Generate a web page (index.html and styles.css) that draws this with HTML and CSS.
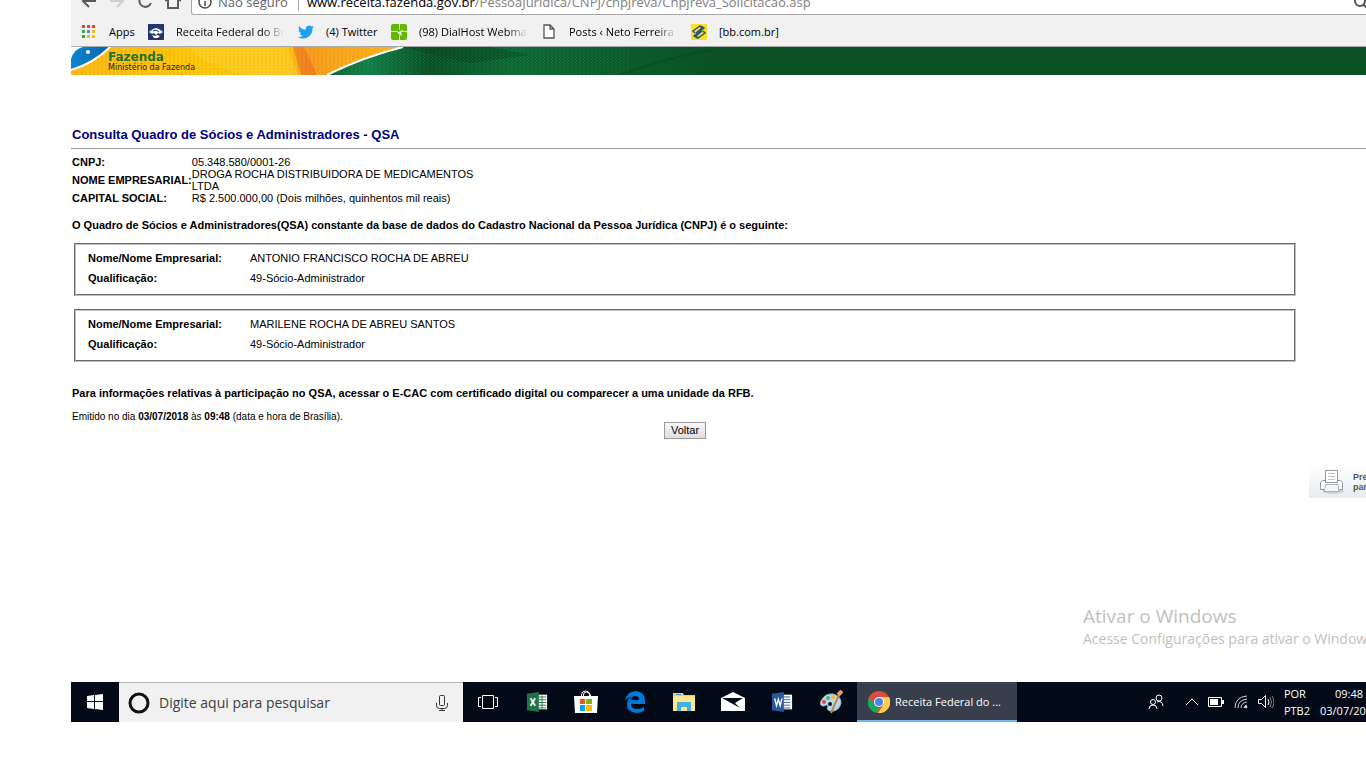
FILE: index.html
```html
<!DOCTYPE html>
<html lang="pt-BR">
<head>
<meta charset="utf-8">
<title>Consulta Quadro de Sócios e Administradores - QSA</title>
<link rel="stylesheet" href="styles.css">
</head>
<body>
<div class="screen">
  <div class="toolbar">
    <div class="nav">
      <button class="nav-btn" aria-label="Voltar página"><svg width="16" height="16" viewBox="0 0 16 16" fill="none" stroke="#5a5a5a" stroke-width="2"><path d="M15 8H2M8 2L2 8l6 6"/></svg></button>
      <button class="nav-btn" aria-label="Avançar"><svg width="16" height="16" viewBox="0 0 16 16" fill="none" stroke="#cfcfcf" stroke-width="2"><path d="M1 8h13M8 2l6 6-6 6"/></svg></button>
      <button class="nav-btn" aria-label="Recarregar"><svg width="16" height="16" viewBox="0 0 16 16" fill="none" stroke="#5a5a5a" stroke-width="2"><path d="M13 4a6 6 0 1 0 1 6"/></svg></button>
      <button class="nav-btn" aria-label="Início"><svg width="16" height="16" viewBox="0 0 16 16" fill="none" stroke="#5a5a5a" stroke-width="2"><path d="M0 8l8-7 8 7M3 7v8h10V7"/></svg></button>
    </div>
    <div class="address">
      <svg width="14" height="14" viewBox="0 0 14 14" fill="none" stroke="#4a4a4a" stroke-width="1.500"><circle cx="7" cy="7" r="6"/><path d="M7 6v5M7 3v2"/></svg>
      <span class="insecure">Não seguro</span>
      <span class="divider"></span>
      <span class="url">www.receita.fazenda.gov.br<span class="path">/PessoaJuridica/CNPJ/cnpjreva/Cnpjreva_Solicitacao.asp</span></span>
      <svg class="lens" width="16" height="16" viewBox="0 0 16 16" fill="none" stroke="#555" stroke-width="2"><circle cx="6" cy="7" r="5"/><path d="M9 10l5 5"/></svg>
    </div>
  </div>
  <nav class="bookmarks">
    <a href="#" class="bm bm-apps"><svg width="14" height="14" viewBox="0 0 14 14"><path fill="#ea4335" d="M0 0h3v3H0zM5 0h3v3H5zM10 0h3v3h-3z"/><path fill="#34a853" d="M0 5h3v3H0zM0 10h3v3H0z"/><path fill="#4285f4" d="M5 5h3v3H5z"/><path fill="#fbbc05" d="M10 5h3v3h-3zM5 10h3v3H5zM10 10h3v3h-3z"/></svg><span>Apps</span></a>
    <a href="#" class="bm bm-receita"><svg width="16" height="16" viewBox="0 0 16 16"><path fill="#22366f" d="M0 0h16v16H0z"/><path fill="#fff" d="M1 8l4-3 3-1 3 1 4 3-3 2-2-1-2 2-2-2-2 1zM4 11l3 1 2-1 3 1-2 2H6z"/><path stroke="#22366f" fill="none" d="M5 7l3-1 3 2"/></svg><span>Receita Federal do Brasil</span></a>
    <a href="#" class="bm bm-twitter"><svg width="16" height="16" viewBox="0 0 24 24"><path fill="#1da1f2" d="M24 4.600a10 10 0 0 1-2.800.8 5 5 0 0 0 2.100-2.700 10 10 0 0 1-3.100 1.200 4.900 4.900 0 0 0-8.400 4.500A14 14 0 0 1 1.700 3.200a4.900 4.900 0 0 0 1.500 6.500 5 5 0 0 1-2.200-.6 4.900 4.900 0 0 0 3.900 4.900 5 5 0 0 1-2.200.1 4.900 4.900 0 0 0 4.600 3.400A10 10 0 0 1 0 19.500 14 14 0 0 0 21.500 7a10 10 0 0 0 2.500-2.400z"/></svg><span>(4) Twitter</span></a>
    <a href="#" class="bm bm-dial"><svg width="16" height="16" viewBox="0 0 16 16"><rect width="16" height="16" rx="2" fill="#62b800"/><path stroke="#d9f0bf" d="M8.500 0v6M0 7.500h5M11 7.500h5M8.500 11v5"/><path fill="#fff" d="M4 6l4 2 4-3-2 4 1 3-3-2z"/></svg><span>(98) DialHost Webmail</span></a>
    <a href="#" class="bm bm-posts"><svg width="12" height="16" viewBox="0 0 12 16"><path fill="#fff" stroke="#555" stroke-width="1.300" d="M1 1h6l4 4v9H1zM7 1v4h4"/></svg><span>Posts ‹ Neto Ferreira —</span></a>
    <a href="#" class="bm bm-bb"><svg width="16" height="16" viewBox="0 0 16 16"><path fill="#fae128" d="M0 0h16v16H0z"/><path fill="none" stroke="#27557c" stroke-width="1.500" d="M4 9L2 7l7-5 2 2-6 5M12 7l2 2-7 5-2-2 6-5M10 2l3 2-5 4M6 14l-3-2 5-4"/></svg><span>[bb.com.br]</span></a>
  </nav>

  <main class="page">
    <header class="banner">
      <svg class="flag" width="720" height="28" viewBox="0 0 720 28" aria-hidden="true">
        <defs>
          <linearGradient id="gold"><stop offset="0" stop-color="#fdb913"/><stop offset=".4" stop-color="#ffc60a"/><stop offset=".66" stop-color="#ffc20e"/><stop offset=".72" stop-color="#f99a1c"/><stop offset=".8" stop-color="#f9a61a"/><stop offset="1" stop-color="#fdb515"/></linearGradient>
          <linearGradient id="green"><stop offset="0" stop-color="#0a5a2c"/><stop offset=".14" stop-color="#138048"/><stop offset=".3" stop-color="#0a5127"/><stop offset=".5" stop-color="#0d6a34"/><stop offset="1" stop-color="#0a5224"/></linearGradient>
          <linearGradient id="blue"><stop offset="0" stop-color="#0b86cf"/><stop offset="1" stop-color="#0564ad"/></linearGradient>
          <pattern id="weave" width="4" height="3" patternUnits="userSpaceOnUse"><path stroke="#fff" stroke-opacity=".07" d="M0 0l2 2"/><path stroke="#000" stroke-opacity=".08" d="M2 0l2 2"/></pattern>
        </defs>
        <path fill="url(#green)" d="M240 0h400v28H240z"/>
        <path fill="#073e1d" fill-opacity=".35" d="M330 0h90l40 8-60 8z"/>
        <path fill="none" stroke="#07451f" stroke-opacity=".5" stroke-width="2" d="M550 28q40-16 90-25"/>
        <path fill="url(#gold)" d="M0 0h330q-40 10-75 28H0z"/>
        <path fill="#ed7020" fill-opacity=".6" d="M222 0l8 28h16l-13-28z"/>
        <path fill="#ffd637" fill-opacity=".4" d="M118 0q10 16 55 28h55L215 0z"/>
        <path fill="url(#weave)" d="M0 0h560v28H0z"/>
        <path fill="none" stroke="#fff" stroke-width="2" d="M332 0q-40 10-76 28"/>
        <path fill="url(#blue)" d="M0 0h38Q22 16 0 23z"/>
        <path fill="none" stroke="#fff" stroke-width="2" d="M39 0Q23 16 0 23"/>
        <path fill="#fff" d="M0 0h12Q3 2 0 12z"/><circle cx="17" cy="5" r="2" fill="#fff"/>
      </svg>
      <div class="brand"><span class="brand-name">Fazenda</span><span class="brand-sub">Ministério da Fazenda</span></div>
    </header>

    <h1 class="title">Consulta Quadro de Sócios e Administradores - QSA</h1>
    <table class="company">
      <tr><th scope="row">CNPJ:</th><td>05.348.580/0001-26</td></tr>
      <tr><th scope="row">NOME EMPRESARIAL:</th><td>DROGA ROCHA DISTRIBUIDORA DE MEDICAMENTOS LTDA</td></tr>
      <tr><th scope="row">CAPITAL SOCIAL:</th><td>R$ 2.500.000,00 (Dois milhões, quinhentos mil reais)</td></tr>
    </table>
    <div class="content">
      <p class="note">O Quadro de Sócios e Administradores(QSA) constante da base de dados do Cadastro Nacional da Pessoa Jurídica (CNPJ) é o seguinte:</p>
      <dl class="partner">
        <dt>Nome/Nome Empresarial:</dt><dd>ANTONIO FRANCISCO ROCHA DE ABREU</dd>
        <dt>Qualificação:</dt><dd>49-Sócio-Administrador</dd>
      </dl>
      <dl class="partner">
        <dt>Nome/Nome Empresarial:</dt><dd>MARILENE ROCHA DE ABREU SANTOS</dd>
        <dt>Qualificação:</dt><dd>49-Sócio-Administrador</dd>
      </dl>
      <p class="note note-info">Para informações relativas à participação no QSA, acessar o E-CAC com certificado digital ou comparecer a uma unidade da RFB.</p>
      <p class="issued">Emitido no dia <b>03/07/2018</b> às <b>09:48</b> (data e hora de Brasília).</p>
      <div class="actions"><button class="back">Voltar</button></div>
    </div>
    <a href="#" class="print">
      <svg width="26" height="26" viewBox="0 0 26 26"><ellipse cx="14" cy="22" rx="11" ry="3" fill="#ccd0d6"/><path fill="#fff" stroke="#94999f" d="M6.500 1.500h12v12h-12z"/><path stroke="#c2c5ca" d="M9 4.500h7M9 7.500h7M9 10.500h7"/><path fill="#fff" stroke="#94999f" d="M3.500 11.500h3v2h12v-2h3l2 2v7h-3l-1 2h-13l-1-2h-4v-7z"/><path fill="#f5f6f8" stroke="#aeb2b8" d="M7 15.500h12l1 7H5z"/></svg>
      <span>Preparar página<br>para impressão</span>
    </a>
    <div class="activate"><div class="activate-title">Ativar o Windows</div><div class="activate-text">Acesse Configurações para ativar o Windows.</div></div>
  </main>

  <footer class="taskbar">
    <button class="task" aria-label="Iniciar"><svg width="16" height="16" viewBox="0 0 16 16"><path fill="#fff" d="M0 2l7-1v6H0zM8 1l8-1v7H8zM0 8h7v7l-7-1zM8 8h8v8l-8-1z"/></svg></button>
    <label class="search">
      <svg width="22" height="22" viewBox="0 0 22 22" fill="none"><circle cx="11" cy="11" r="9" stroke="#111" stroke-width="3"/></svg>
      <input type="text" placeholder="Digite aqui para pesquisar" aria-label="Digite aqui para pesquisar">
      <svg width="12" height="18" viewBox="0 0 12 18" fill="none" stroke="#333"><rect x="3.500" y="1.500" width="5" height="10" rx="1"/><path d="M.5 9v2.500q0 3 3 3h5q3 0 3-3V9M6 15v2M3 16.500h6"/></svg>
    </label>
    <div class="apps">
      <button class="task" aria-label="Visão de tarefas"><svg width="20" height="16" viewBox="0 0 20 16" fill="none" stroke="#fff"><path d="M4.500 1.500h11v13h-11zM3 3.500H.5v9H3M17 3.500h2.500v9H17"/></svg></button>
      <button class="task" aria-label="Excel"><svg width="22" height="22" viewBox="0 0 24 22"><path fill="#fff" d="M12 3h11v16H12z"/><path stroke="#217346" d="M13 5.500h9M13 8.500h9M13 11.500h9M13 14.500h9M13 17.500h9M17.500 4v14"/><path fill="#217346" d="M1 2l13-2v22L1 20z"/><path stroke="#fff" stroke-width="2" d="M5 7l5 8M10 7l-5 8"/></svg></button>
      <button class="task" aria-label="Loja"><svg width="24" height="24" viewBox="0 0 24 24"><path fill="none" stroke="#fff" d="M7.500 7V5q0-4 4-4t4 4v2M9.500 7V5q0-3 3-3t4 3v2"/><path fill="#fff" d="M0 6h24l-1 17H1z"/><path fill="#f25022" d="M6 9h5v5H6z"/><path fill="#7fba00" d="M12 9h6v5h-6z"/><path fill="#00a4ef" d="M6 15h5v6H6z"/><path fill="#ffb900" d="M12 15h6v6h-6z"/></svg></button>
      <button class="task" aria-label="Edge"><svg width="22" height="22" viewBox="0 0 22 22"><path fill="#0078d7" d="M1 10Q3 0 12 0q9 1 9 9v4H7q0 5 6 5 4 0 7-2v4q-3 2-8 2-9-1-9-9 0-5 5-7-4 0-7 4zM7 9h8q0-4-4-4-3 0-4 4z"/></svg></button>
      <button class="task" aria-label="Explorador"><svg width="22" height="20" viewBox="0 0 22 20"><path fill="#f5cc60" d="M1 1h9l1 2h11v4H0V1z"/><path fill="#fde68f" d="M0 4h22v15H0z"/><path fill="#41b1e6" d="M4 19v-9h14v9h-4v-4H8v4z"/><path fill="#3b98c9" d="M3 2h5v1H3z"/></svg></button>
      <button class="task" aria-label="Email"><svg width="24" height="20" viewBox="0 0 24 20"><path fill="#fff" d="M0 6l12-6 12 6v13H0z"/><path fill="#020a18" d="M1 6h21l-8 5 5 5-9-5z"/></svg></button>
      <button class="task" aria-label="Word"><svg width="22" height="22" viewBox="0 0 24 22"><path fill="#fff" d="M12 3h11v16H12z"/><path stroke="#2b579a" d="M14 5.500h7M14 8.500h7M14 11.500h7M14 14.500h7M14 17.500h7"/><path fill="#2b579a" d="M1 2l13-2v22L1 20z"/><path fill="none" stroke="#fff" stroke-width="1.500" d="M4 7l2 8 2-7 2 7 2-8"/></svg></button>
      <button class="task" aria-label="Paint"><svg width="24" height="24" viewBox="0 0 24 24"><path fill="#b7d9ee" stroke="#8db9d6" d="M2 11Q6 3 14 4q8 2 8 9-2 9-11 8-4-1-2-5-1-2-4 0-5 0-3-5z"/><circle cx="5" cy="12" r="2" fill="#e3434b"/><circle cx="9" cy="8" r="2" fill="#53b748"/><circle cx="14" cy="7" r="2" fill="#f6b81f"/><circle cx="11" cy="14" r="2" fill="#0b1425"/><path fill="none" stroke="#c98443" stroke-width="2" d="M20 5l-5 11-3 7"/><path stroke="#dba169" stroke-width="4" d="M19 5l4-4"/></svg></button>
    </div>
    <button class="running"><svg width="22" height="22" viewBox="0 0 22 22"><circle cx="11" cy="11" r="11" fill="#dd4b3e"/><path fill="#1da362" d="M1 6l6 8 4 2-1 6A11 11 0 0 1 1 6z"/><path fill="#ffcd46" d="M11 6h10a11 11 0 0 1-11 16l6-9z"/><circle cx="11" cy="11" r="5" fill="#fff"/><circle cx="11" cy="11" r="4" fill="#4285f4"/></svg><span>Receita Federal do ...</span></button>
    <div class="tray">
      <svg width="16" height="16" viewBox="0 0 16 16" fill="none" stroke="#fff"><circle cx="11" cy="4" r="3"/><circle cx="5" cy="8" r="2.500"/><path d="M1 15q0-4 4-4t4 4M9 8q5-2 6 4"/></svg>
      <svg class="chevron" width="12" height="8" viewBox="0 0 12 8" fill="none" stroke="#fff"><path d="M0 7l6-6 6 6"/></svg>
      <svg width="16" height="10" viewBox="0 0 16 10"><path fill="none" stroke="#fff" d="M.5.5h13v9H.5z"/><path fill="#fff" d="M2 2h8v6H2zM14 3h2v4h-2z"/></svg>
      <svg width="14" height="14" viewBox="0 0 14 14" fill="none" stroke="#d0d3d8"><path d="M1 13Q1 2 13 1M4 13q0-8 9-9M7 13q0-5 6-6M10 13q0-2 3-3"/><circle cx="12" cy="12" r="1" fill="#fff"/></svg>
      <svg width="16" height="14" viewBox="0 0 16 14" fill="none" stroke="#fff"><path d="M.5 4.500h3l4-4v12l-4-4h-3z"/><path d="M10 4q2 3 0 6"/><path stroke="#7d828b" d="M12 2q3 5 0 10M14 1q4 6 0 12"/></svg>
      <div class="lang"><span>POR</span><span>PTB2</span></div>
      <div class="clock"><span class="time">09:48</span><span>03/07/2018</span></div>
    </div>
  </footer>
</div>
</body>
</html>
```
FILE: styles.css
```css
* { box-sizing: border-box; }
body { margin: 0; background: #fff; font-family: "Liberation Sans", Arial, sans-serif; font-size: 11px; line-height: 12px; color: #000; overflow-x: hidden; }
button { border: 0; background: none; padding: 0; font: inherit; color: inherit; }
a { color: inherit; text-decoration: none; }
svg { flex: none; display: block; }
.screen { min-height: 100vh; padding: 0 0 46px 71px; display: flex; flex-direction: column; overflow: hidden; }

.toolbar { display: flex; align-items: flex-end; height: 15px; background: #f1f1f1; overflow: hidden; font-family: "Open Sans", "Noto Sans", sans-serif; font-size: 13px; }
.nav { display: flex; gap: 12px; padding: 0 10px 6px; flex: none; }
.address { flex: 1; min-width: 0; height: 30px; display: flex; align-items: center; gap: 6px; padding: 4px 0 0 6px; background: #fff; border: 1px solid #a8a8a8; border-right: 0; border-radius: 3px 0 0 3px; white-space: nowrap; line-height: 20px; }
.insecure { color: #666; }
.divider { width: 1px; height: 18px; background: #aaa; margin: 0 2px 0 4px; }
.path { color: #808080; }
.lens { margin: 0 -4px 0 auto; }

.bookmarks { display: flex; align-items: center; height: 32px; padding: 2px 0 0 11px; background: #f1f1f1; border-bottom: 1px solid #aaa; font-family: "Open Sans", "Noto Sans", sans-serif; font-size: 11px; line-height: 18px; }
.bm { display: flex; align-items: center; gap: 12px; white-space: nowrap; flex: none; }
.bm span { overflow: hidden; }
.bm-apps { width: 66px; gap: 13px; }
.bm-receita { width: 150px; }
.bm-twitter { width: 93px; }
.bm-dial { width: 152px; }
.bm-posts { width: 148px; gap: 14px; }
.bm-receita span { width: 108px; }
.bm-dial span { width: 109px; }
.bm-posts span { width: 108px; }
.bm-receita span, .bm-dial span, .bm-posts span { -webkit-mask-image: linear-gradient(90deg, #000 80%, transparent); mask-image: linear-gradient(90deg, #000 80%, transparent); }

.page { flex: 1; display: flex; flex-direction: column; }
.banner { display: grid; height: 28px; background: #0a5224; overflow: hidden; }
.flag, .brand { grid-area: 1 / 1; }
.brand { display: flex; flex-direction: column; padding: 4px 0 0 37px; font-family: "DejaVu Sans", sans-serif; }
.brand-name { font-size: 12px; line-height: 13px; font-weight: bold; color: #21722f; }
.brand-sub { font-size: 8px; line-height: 8px; color: #1c1c00; }

.title { margin: 52px 0 0; padding: 0 1px 5px; border-bottom: 1px solid #999; font-size: 13px; line-height: 16px; color: #000080; }
.company { width: 420px; margin: 7px 0 0; border-collapse: collapse; }
.company th, .company td { padding: 0; text-align: left; vertical-align: middle; }
.company th { width: 120px; padding-left: 1px; white-space: nowrap; }
.content { margin-right: 67px; }
.note { margin: 15px 1px 12px; font-weight: bold; }
.partner { display: grid; grid-template-columns: 162px 1fr; row-gap: 8px; margin: 0 3px 13px; padding: 7px 12px 10px; border: 2px groove #c0c0c0; }
.partner dt { font-weight: bold; }
.partner dd { margin: 0; }
.note-info { margin-top: 25px; }
.issued { margin: 0 1px; font-size: 10px; line-height: 11px; }
.actions { display: flex; justify-content: center; }
.back { height: 17px; padding: 0 6px; border: 1px solid #999; background: linear-gradient(#f8f8f8, #ddd); font-size: 11px; line-height: 15px; }
.print { align-self: flex-end; display: flex; align-items: center; gap: 8px; width: 57px; height: 33px; margin-top: 26px; padding: 1px 0 0 10px; background: linear-gradient(#fff, #e8ebf2); color: #555; font-size: 9px; line-height: 10px; font-weight: bold; white-space: nowrap; overflow: hidden; }
.activate { align-self: flex-end; width: 283px; margin: auto 0 33px; color: #bfbfbf; font-family: "Open Sans", "Noto Sans", sans-serif; white-space: nowrap; overflow: hidden; }
.activate-title { font-size: 19px; line-height: 25px; }
.activate-text { font-size: 14px; line-height: 20px; }

.taskbar { display: flex; height: 40px; background: #020a18; color: #fff; font-family: "Open Sans", "Noto Sans", sans-serif; font-size: 11px; }
.task { width: 48px; height: 40px; display: flex; align-items: center; justify-content: center; flex: none; }
.search { display: flex; align-items: center; flex: none; width: 344px; padding: 0 15px 0 9px; gap: 9px; background: #f1f1f1; border-top: 1px solid #b8b8b8; }
.search input { flex: 1; min-width: 0; padding: 0; border: 0; background: none; outline: 0; font: 14px/20px "Open Sans", "Noto Sans", sans-serif; }
.search input::placeholder { color: #404040; opacity: 1; }
.apps { display: flex; gap: 1px; padding: 0 2px 0 1px; }
.running { display: flex; align-items: center; gap: 5px; width: 160px; flex: none; padding: 2px 0 0 11px; background: #383e4b; border-bottom: 2px solid #76b9ed; white-space: nowrap; }
.tray { display: flex; align-items: center; gap: 10px; margin-left: auto; }
.chevron { margin-left: 12px; }
.lang, .clock { display: flex; flex-direction: column; line-height: 17px; }
.clock { width: 46px; overflow: hidden; }
.time { padding-left: 15px; }
```
